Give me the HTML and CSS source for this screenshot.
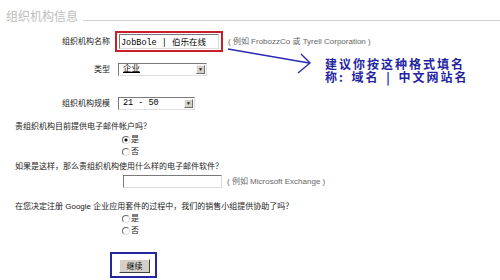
FILE: index.html
```html
<!DOCTYPE html>
<html lang="zh-CN">
<head>
  <meta charset="UTF-8">
  <title>组织机构信息</title>
  <link rel="stylesheet" href="styles.css">
</head>
<body>
  <div class="page">

    <!-- Section header -->
    <div class="title">
      <span class="title-text">组织机构信息</span>
      <span class="title-rule"></span>
    </div>

    <!-- Organisation fields -->
    <div class="field field-name">
      <label class="field-label">组织机构名称</label>
      <span class="highlight"><input class="text-input name-input" type="text" value="JobBole | 伯乐在线"></span>
      <span class="hint">( 例如 FrobozzCo 或 Tyrell Corporation )</span>
    </div>

    <div class="field field-type">
      <label class="field-label">类型</label>
      <span class="select-wrap">
        <select class="select select-type"><option>企业</option></select>
        <span class="select-arrow">▼</span>
      </span>
    </div>

    <div class="field field-size">
      <label class="field-label">组织机构规模</label>
      <span class="select-wrap">
        <select class="select select-size"><option>21 - 50</option></select>
        <span class="select-arrow">▼</span>
      </span>
    </div>

    <!-- Questions -->
    <p class="question q-mail">贵组织机构目前提供电子邮件帐户吗？</p>
    <div class="choices">
      <label class="choice"><input class="radio" type="radio" name="mail" checked> 是</label>
      <label class="choice"><input class="radio" type="radio" name="mail"> 否</label>
    </div>

    <p class="question q-soft">如果是这样，那么贵组织机构使用什么样的电子邮件软件？</p>
    <div class="soft-row">
      <input class="text-input soft-input" type="text">
      <span class="hint">( 例如 Microsoft Exchange )</span>
    </div>

    <p class="question q-sales">在您决定注册 Google 企业应用套件的过程中，我们的销售小组提供协助了吗？</p>
    <div class="choices">
      <label class="choice"><input class="radio" type="radio" name="sales"> 是</label>
      <label class="choice"><input class="radio" type="radio" name="sales"> 否</label>
    </div>

    <div class="submit-box">
      <button class="submit-btn" type="button">继续</button>
    </div>

    <!-- Annotation -->
    <svg class="arrow" width="500" height="280" viewBox="0 0 500 280">
      <line x1="228" y1="49" x2="309" y2="63" stroke="#2a2ab4" stroke-width="1.4"/>
      <polyline points="301,54 310,63 298,73" fill="none" stroke="#2a2ab4" stroke-width="1.4"/>
    </svg>
    <div class="note">
      <div>建议你按这种格式填名</div>
      <div>称: 域名 | 中文网站名</div>
    </div>

  </div>
</body>
</html>
```

FILE: styles.css
```css
body {
  margin: 0;
  font-family: "Liberation Sans", "Noto Sans CJK SC", sans-serif;
  font-size: 8px;
  line-height: 12px;
  color: #222;
  background-color: #ffffff;
}

.page {
  position: relative;
  width: 500px;
  height: 280px;
  overflow: hidden;
}

/* Header */
.title {
  display: flex;
  align-items: flex-end;
  padding: 8px 0 0 6px;
}

.title-text {
  font-family: "Noto Sans CJK SC", sans-serif;
  font-size: 12px;
  line-height: 16px;
  color: #bdbdbd;
}

.title-rule {
  flex: 1;
  border-top: 1px solid #d0d0d0;
  margin: 0 0 3px 5px;
}

/* Field rows */
.field {
  display: grid;
  grid-template-columns: 110px auto auto;
  column-gap: 5px;
  align-items: center;
  justify-content: start;
}

.field-label {
  text-align: right;
}

.field-name {
  margin-top: 7px;
}

.field-type {
  margin-top: 11px;
}

.field-size {
  margin-top: 21px;
}

.highlight {
  display: flex;
  border: 2px solid #c8202a;
  padding: 1px 2px;
}

.text-input {
  box-sizing: border-box;
  height: 15px;
  margin: 0;
  padding: 0 1px;
  border: 1px solid;
  border-color: #7a7a7a #dcdcdc #dcdcdc #7a7a7a;
  font-family: "Liberation Mono", "Noto Sans CJK SC", monospace;
  font-size: 8.5px;
  color: #000;
  background-color: #fff;
  outline: none;
}

.name-input {
  width: 100px;
}

.hint {
  color: #666;
  white-space: nowrap;
}

.select-wrap {
  position: relative;
  display: flex;
  margin-left: 3px;
}

.select {
  appearance: none;
  box-sizing: border-box;
  height: 13px;
  margin: 0;
  padding: 0 12px 0 4px;
  border: 1px solid;
  border-color: #7a7a7a #e0e0e0 #e0e0e0 #7a7a7a;
  border-radius: 0;
  font-family: "Liberation Mono", "Noto Sans CJK SC", monospace;
  font-size: 8.5px;
  line-height: 11px;
  color: #000;
  background-color: #fff;
}

.select-type {
  width: 89px;
  text-decoration: underline;
}

.select-size {
  width: 77px;
}

.select-arrow {
  position: absolute;
  right: 2px;
  top: 2px;
  width: 9px;
  height: 9px;
  box-sizing: border-box;
  border: 1px solid;
  border-color: #f4f4f4 #707070 #707070 #f4f4f4;
  background-color: #d4d0c8;
  font-size: 5px;
  line-height: 7px;
  text-align: center;
  color: #222;
}

/* Questions */
.question {
  margin: 0;
  padding-left: 15px;
  white-space: nowrap;
}

.q-mail {
  margin-top: 11px;
}

.q-soft {
  margin-top: 3px;
}

.q-sales {
  margin-top: 13px;
}

.choices {
  padding-left: 122px;
  margin-top: 1px;
}

.q-sales + .choices {
  margin-top: 0;
}

.choice {
  display: flex;
  align-items: center;
  gap: 1px;
  height: 12px;
}

.radio {
  appearance: none;
  box-sizing: border-box;
  width: 8px;
  height: 8px;
  margin: 0;
  border: 1px solid;
  border-color: #6a6a6a #dcdcdc #dcdcdc #6a6a6a;
  border-radius: 50%;
  background-color: #fff;
}

.radio:checked {
  background: radial-gradient(circle, #111 0 1.3px, #fff 1.8px);
}

.soft-row {
  display: flex;
  align-items: center;
  gap: 5px;
  margin-top: 2px;
  padding-left: 123px;
}

.soft-input {
  width: 99px;
  height: 13px;
}

/* Continue button */
.submit-box {
  width: fit-content;
  margin: 15px 0 0 110px;
  padding: 5px 5px 3px 7px;
  border: 2px solid #2626a0;
}

.submit-btn {
  display: block;
  width: 31px;
  height: 14px;
  padding: 0;
  border: 1px solid;
  border-color: #ffffff #404040 #404040 #ffffff;
  background-color: #d4d0c8;
  font-family: "Noto Sans CJK SC", sans-serif;
  font-size: 8px;
  line-height: 12px;
  color: #000;
}

/* Annotation overlay */
.arrow {
  position: absolute;
  left: 0;
  top: 0;
  pointer-events: none;
}

.note {
  position: absolute;
  left: 325px;
  top: 57px;
  font-family: "Noto Sans CJK SC", sans-serif;
  font-size: 12px;
  font-weight: bold;
  line-height: 13px;
  letter-spacing: 2px;
  word-spacing: 2px;
  color: #2424a0;
  white-space: nowrap;
}
```
